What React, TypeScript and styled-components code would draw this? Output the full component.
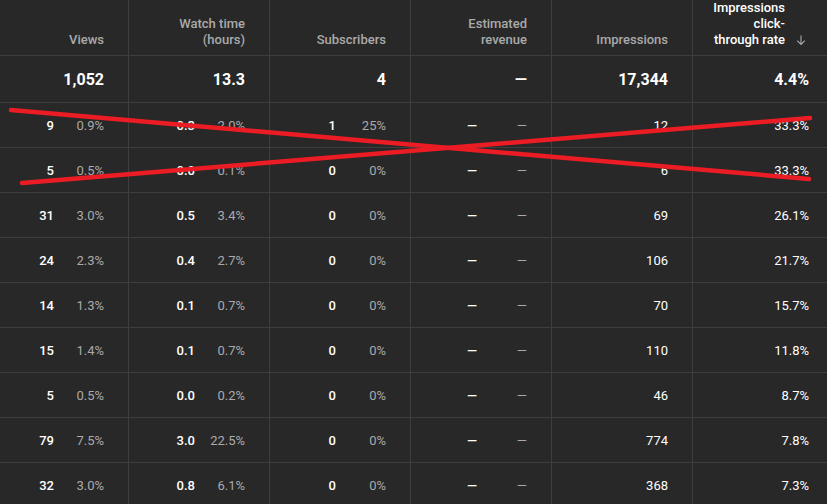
import { FC } from 'react';
import styled, { createGlobalStyle } from 'styled-components';

const GlobalStyle = createGlobalStyle`
  html, body {
    margin: 0;
    padding: 0;
    background: #282828;
    overflow: hidden;
  }
  body {
    font-family: Roboto, "Noto Sans", Arial, sans-serif;
  }
`

type Cell = { v: string; p?: string }

const headers: { lines: string[]; sorted?: boolean }[] = [
  { lines: ['Views'] },
  { lines: ['Watch time', '(hours)'] },
  { lines: ['Subscribers'] },
  { lines: ['Estimated', 'revenue'] },
  { lines: ['Impressions'] },
  { lines: ['Impressions', 'click-', 'through rate'], sorted: true },
]

const totals = ['1,052', '13.3', '4', '—', '17,344', '4.4%']

const rows: [string, string, string, string, string, string, string, string][] = [
  ['9', '0.9%', '0.3', '2.0%', '1', '25%', '12', '33.3%'],
  ['5', '0.5%', '0.0', '0.1%', '0', '0%', '6', '33.3%'],
  ['31', '3.0%', '0.5', '3.4%', '0', '0%', '69', '26.1%'],
  ['24', '2.3%', '0.4', '2.7%', '0', '0%', '106', '21.7%'],
  ['14', '1.3%', '0.1', '0.7%', '0', '0%', '70', '15.7%'],
  ['15', '1.4%', '0.1', '0.7%', '0', '0%', '110', '11.8%'],
  ['5', '0.5%', '0.0', '0.2%', '0', '0%', '46', '8.7%'],
  ['79', '7.5%', '3.0', '22.5%', '0', '0%', '774', '7.8%'],
  ['32', '3.0%', '0.8', '6.1%', '0', '0%', '368', '7.3%'],
]

const toCells = (r: typeof rows[number]): Cell[] => [
  { v: r[0], p: r[1] },
  { v: r[2], p: r[3] },
  { v: r[4], p: r[5] },
  { v: '—', p: '—' },
  { v: r[6] },
  { v: r[7] },
]

const SortIcon: FC = () => (
  <svg width="16" height="16" viewBox="0 0 16 16" fill="none">
    <path d="M8 3.5V12.5M4.2 8.7L8 12.5L11.8 8.7" stroke="#aaa" strokeWidth="1.1" />
  </svg>
)

const App: FC = () => {
  return (
    <>
      <GlobalStyle />
      <PageSC>
        <TableSC>
          <HeadRowSC>
            {headers.map((h, i) => (
              <HeadCellSC key={i} $sorted={!!h.sorted}>
                <HeadLabelSC>
                  {h.lines.map((l, j) => (
                    <div key={j}>{l}</div>
                  ))}
                </HeadLabelSC>
                {h.sorted && (
                  <SortSC>
                    <SortIcon />
                  </SortSC>
                )}
              </HeadCellSC>
            ))}
          </HeadRowSC>
          <TotalRowSC>
            {totals.map((t, i) => (
              <TotalCellSC key={i}>{t}</TotalCellSC>
            ))}
          </TotalRowSC>
          {rows.map((r, i) => (
            <RowSC key={i}>
              {toCells(r).map((c, j) => (
                <CellSC key={j}>
                  <ValueSC $strong={c.p !== undefined}>{c.v}</ValueSC>
                  {c.p !== undefined && <PctSC>{c.p}</PctSC>}
                </CellSC>
              ))}
            </RowSC>
          ))}
        </TableSC>
        <CrossSC width="827" height="504" viewBox="0 0 827 504">
          <line x1="11" y1="110" x2="809" y2="179" stroke="#ec1c24" strokeWidth="4.5" strokeLinecap="round" />
          <line x1="22" y1="183" x2="810" y2="118" stroke="#ec1c24" strokeWidth="4.5" strokeLinecap="round" />
        </CrossSC>
      </PageSC>
    </>
  )
}

export default App;

const BORDER = '#3e3e3e'

const PageSC = styled.div`
  position: relative;
  width: 827px;
  height: 504px;
  overflow: hidden;
  background: #282828;
`

const TableSC = styled.div`
  width: 834px;
`

const RowBase = styled.div`
  display: grid;
  grid-template-columns: 129px repeat(5, 141px);
  box-sizing: border-box;
  border-bottom: 1px solid ${BORDER};
  & > div {
    border-right: 1px solid ${BORDER};
    box-sizing: border-box;
  }
`

const HeadRowSC = styled(RowBase)`
  height: 56px;
`

const HeadCellSC = styled.div<{ $sorted: boolean }>`
  display: flex;
  justify-content: flex-end;
  align-items: flex-end;
  gap: 8px;
  padding: 0 ${p => p.$sorted ? '0' : '24px'} 7px 0;
  color: ${p => p.$sorted ? '#fff' : '#aaa'};
  font-size: 13px;
  font-weight: 500;
  line-height: 16px;
  text-align: right;
`

const HeadLabelSC = styled.div``

const SortSC = styled.div`
  width: 16px;
  height: 16px;
  margin-right: 24px;
  display: flex;
  align-items: center;
  justify-content: center;
`

const TotalRowSC = styled(RowBase)`
  height: 47px;
`

const TotalCellSC = styled.div`
  display: flex;
  justify-content: flex-end;
  align-items: center;
  padding-right: 24px;
  color: #fff;
  font-size: 16px;
  font-weight: 700;
`

const RowSC = styled(RowBase)`
  height: 45px;
`

const CellSC = styled.div`
  display: flex;
  justify-content: flex-end;
  align-items: center;
  padding-right: 24px;
  font-size: 13px;
`

const ValueSC = styled.span<{ $strong: boolean }>`
  color: #fff;
  font-weight: ${p => p.$strong ? 500 : 400};
`

const PctSC = styled.span`
  width: 50px;
  text-align: right;
  color: #aaa;
`

const CrossSC = styled.svg`
  position: absolute;
  left: 0;
  top: 0;
  pointer-events: none;
`
